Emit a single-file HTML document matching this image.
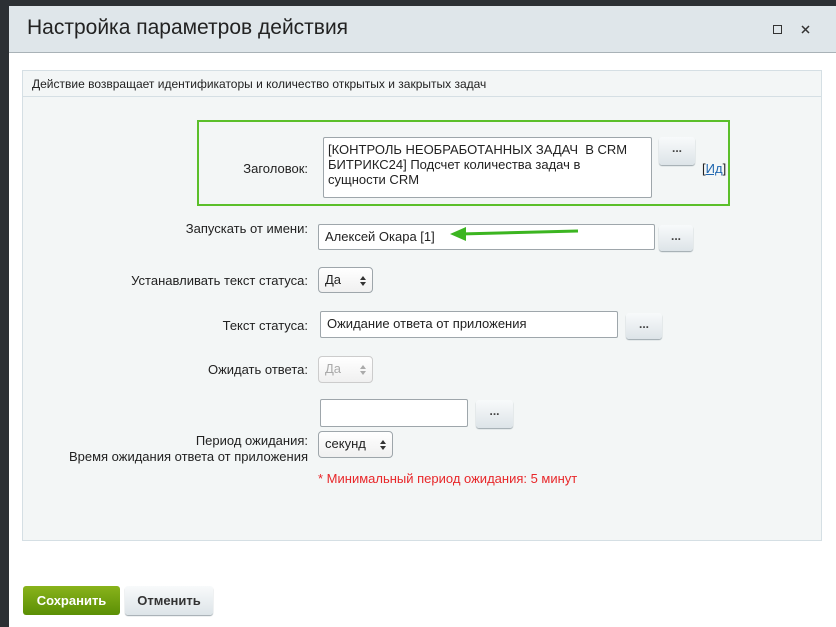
<!DOCTYPE html>
<html><head><meta charset="utf-8"><style>
*{box-sizing:border-box;margin:0;padding:0}
body{width:836px;height:627px;background:#2c3034;font-family:"Liberation Sans",sans-serif;position:relative;overflow:hidden;font-size:13px;color:#222}
.dlg{position:absolute;left:9px;top:6px;width:827px;height:621px;background:#fff}
.hd{position:absolute;left:0;top:0;width:100%;height:47px;background:#dfe6ea;border-bottom:1px solid #a9b2b7}
.hd h1{position:absolute;left:18px;top:10px;font-weight:normal;font-size:21px;color:#222}
.a{position:absolute}
.panel{position:absolute;left:13px;top:64px;width:800px;height:471px;background:#f3f6f6;border:1px solid #d5dfe4}
.desc{position:absolute;left:0;top:0;width:100%;height:26px;border-bottom:1px solid #d5dfe4;font-size:12px;padding:6px 9px}
.lbl{position:absolute;text-align:right;font-size:13px;color:#222}
.inp{position:absolute;background:#fff;border:1px solid #9ea6ab;border-radius:2px;font-size:13px;padding:4px 6px;color:#222}
.btn{position:absolute;background:linear-gradient(#f8fafb,#dde4e8);border-radius:3px;box-shadow:0 1px 1px #9aa5ab;text-align:center;font-size:12px;font-weight:bold;color:#444;line-height:22px}
.sel{position:absolute;background:linear-gradient(#fff,#f0f0f0);border:1px solid #9ea6ab;border-radius:4px;font-size:13px;padding:4px 6px}
.sel svg{position:absolute;right:6px;top:8px}
</style></head><body>
<div class="dlg">
<div class="hd"><h1>Настройка параметров действия</h1>
<div class="a" style="left:764px;top:19px;width:9px;height:9px;border:1px solid #333"></div>
<svg class="a" style="left:792px;top:19px" width="9" height="9"><path d="M1 1L8 8M8 1L1 8" stroke="#333" stroke-width="1.5"/></svg></div>
<div class="panel">
<div class="desc">Действие возвращает идентификаторы и количество открытых и закрытых задач</div>
</div>
</div>
<div class="a" style="left:197px;top:120px;width:533px;height:86px;border:2px solid #5bbf2a"></div>
<div class="lbl" style="left:100px;top:161px;width:208px">Заголовок:</div>
<div class="inp" style="left:323px;top:137px;width:329px;height:61px;line-height:15px;padding:4px 4px;white-space:nowrap">[КОНТРОЛЬ НЕОБРАБОТАННЫХ ЗАДАЧ&nbsp; В CRM<br>БИТРИКС24] Подсчет количества задач в<br>сущности CRM</div>
<div class="btn" style="left:659px;top:137px;width:36px;height:28px">...</div>
<div class="a" style="left:702px;top:161px;font-size:13px">[<span style="color:#2067b0;text-decoration:underline">Ид</span>]</div>
<div class="lbl" style="left:100px;top:221px;width:208px">Запускать от имени:</div>
<div class="inp" style="left:318px;top:224px;width:337px;height:26px">Алексей Окара [1]</div>
<svg class="a" style="left:448px;top:224px" width="135" height="20"><path d="M12 10 L130 7" stroke="#3cb521" stroke-width="3"/><path d="M2 10 L18 3 L18 17 Z" fill="#3cb521"/></svg>
<div class="btn" style="left:659px;top:225px;width:34px;height:26px">...</div>
<div class="lbl" style="left:60px;top:273px;width:248px">Устанавливать текст статуса:</div>
<div class="sel" style="left:318px;top:267px;width:55px;height:26px">Да<svg width="6" height="10"><path d="M0 4L3 0L6 4ZM0 6L3 10L6 6Z" fill="#333"/></svg></div>
<div class="lbl" style="left:60px;top:318px;width:248px">Текст статуса:</div>
<div class="inp" style="left:320px;top:311px;width:298px;height:27px">Ожидание ответа от приложения</div>
<div class="btn" style="left:626px;top:313px;width:36px;height:26px">...</div>
<div class="lbl" style="left:60px;top:362px;width:248px">Ожидать ответа:</div>
<div class="sel" style="left:318px;top:356px;width:55px;height:27px;color:#aaa;border-color:#ccc">Да<svg width="6" height="10"><path d="M0 4L3 0L6 4ZM0 6L3 10L6 6Z" fill="#aaa"/></svg></div>
<div class="inp" style="left:320px;top:399px;width:148px;height:28px"></div>
<div class="btn" style="left:476px;top:400px;width:37px;height:28px">...</div>
<div class="lbl" style="left:40px;top:433px;width:268px;line-height:16px">Период ожидания:<br>Время ожидания ответа от приложения</div>
<div class="sel" style="left:318px;top:431px;width:75px;height:27px">секунд<svg width="6" height="10"><path d="M0 4L3 0L6 4ZM0 6L3 10L6 6Z" fill="#333"/></svg></div>
<div class="a" style="left:318px;top:471px;color:#e8272a;font-size:13px">* Минимальный период ожидания: 5 минут</div>
<div class="a" style="left:23px;top:586px;width:97px;height:29px;background:linear-gradient(#89b31b,#5b8f05);border-radius:3px;color:#fff;font-weight:bold;text-align:center;line-height:29px;font-size:13px">Сохранить</div>
<div class="btn" style="left:125px;top:586px;width:88px;height:29px;line-height:29px;font-size:13px;color:#333">Отменить</div>
</body></html>
